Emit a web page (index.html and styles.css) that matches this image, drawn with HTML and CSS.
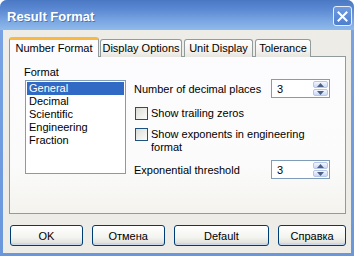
FILE: index.html
```html
<!DOCTYPE html>
<html lang="en">
<head>
    <meta charset="UTF-8">
    <title>Result Format</title>
    <link rel="stylesheet" href="styles.css">
</head>
<body>
    <div class="window">
        <div class="titlebar">
            <span class="title">Result Format</span>
            <button class="close" aria-label="Close">
                <svg width="11" height="11" viewBox="0 0 11 11">
                    <path d="M1.5 1.5 L9.5 9.5 M9.5 1.5 L1.5 9.5" stroke="#fff" stroke-width="2" stroke-linecap="square"/>
                </svg>
            </button>
        </div>

        <div class="body">
            <div class="tabs">
                <div class="tab active tab-number">Number Format</div>
                <div class="tab tab-display">Display Options</div>
                <div class="tab tab-unit">Unit Display</div>
                <div class="tab tab-tol">Tolerance</div>
            </div>

            <div class="panel">
                <div class="format-col">
                    <div class="group-label">Format</div>
                    <ul class="listbox">
                        <li class="selected">General</li>
                        <li>Decimal</li>
                        <li>Scientific</li>
                        <li>Engineering</li>
                        <li>Fraction</li>
                    </ul>
                </div>

                <div class="options-col">
                    <div class="field-row">
                        <span>Number of decimal places</span>
                        <div class="spin">
                            <span class="spin-value">3</span>
                            <div class="spin-buttons">
                                <div class="spin-btn"><svg width="7" height="4" viewBox="0 0 7 4"><path d="M0 4 L3.5 0 L7 4 Z" fill="#4d6185"/></svg></div>
                                <div class="spin-btn"><svg width="7" height="4" viewBox="0 0 7 4"><path d="M0 0 L3.5 4 L7 0 Z" fill="#4d6185"/></svg></div>
                            </div>
                        </div>
                    </div>

                    <label class="check check-first">
                        <span class="box"></span>
                        <span>Show trailing zeros</span>
                    </label>

                    <label class="check check-second">
                        <span class="box"></span>
                        <span>Show exponents in engineering<br>format</span>
                    </label>

                    <div class="field-row field-last">
                        <span>Exponential threshold</span>
                        <div class="spin">
                            <span class="spin-value">3</span>
                            <div class="spin-buttons">
                                <div class="spin-btn"><svg width="7" height="4" viewBox="0 0 7 4"><path d="M0 4 L3.5 0 L7 4 Z" fill="#4d6185"/></svg></div>
                                <div class="spin-btn"><svg width="7" height="4" viewBox="0 0 7 4"><path d="M0 0 L3.5 4 L7 0 Z" fill="#4d6185"/></svg></div>
                            </div>
                        </div>
                    </div>
                </div>
            </div>

            <div class="buttons">
                <button class="btn btn-ok">OK</button>
                <button class="btn btn-cancel">Отмена</button>
                <button class="btn btn-default">Default</button>
                <button class="btn btn-help">Справка</button>
            </div>
        </div>
    </div>
</body>
</html>
```

FILE: styles.css
```css
/* General Styles */
body {
    margin: 0;
    padding: 0;
    background: #ffffff;
    font-family: 'Liberation Sans', Arial, sans-serif;
    font-size: 11px;
    color: #000;
}

.window {
    width: 354px;
    height: 256px;
    box-sizing: border-box;
    display: flex;
    flex-direction: column;
    background: linear-gradient(to bottom, #7aa4e4, #6a96dc);
    border-radius: 7px 7px 0 0;
    overflow: hidden;
}

/* Title bar */
.titlebar {
    height: 30px;
    flex: none;
    display: flex;
    align-items: center;
    justify-content: space-between;
    padding: 0 2px 0 7px;
    background: linear-gradient(to bottom, #4a78c2 0%, #5a88d2 30%, #7eaae4 75%, #8fbaea 100%);
}

.title {
    color: #fff;
    font-weight: bold;
    font-size: 13px;
    text-shadow: 1px 1px 0 rgba(20, 50, 110, 0.45);
    margin-top: 2px;
}

.close {
    width: 19px;
    height: 20px;
    margin-top: 2px;
    padding: 0;
    display: flex;
    align-items: center;
    justify-content: center;
    border: 1px solid #e8eefa;
    border-radius: 3px;
    background: linear-gradient(to bottom, #6e9ae0, #4f7fcf);
}

/* Dialog body */
.body {
    flex: 1;
    margin: 0 3px 3px 3px;
    padding: 7px 5px 0 6px;
    background: #edece7;
    display: flex;
    flex-direction: column;
}

/* Tabs */
.tabs {
    display: flex;
    align-items: flex-end;
    gap: 1px;
    height: 20px;
    position: relative;
    z-index: 1;
    margin-bottom: -1px;
}

.tab {
    box-sizing: border-box;
    height: 18px;
    border: 1px solid #919b9c;
    border-bottom: none;
    border-radius: 3px 3px 0 0;
    background: linear-gradient(to bottom, #ffffff, #f1f0ec 70%, #e6e5df);
    text-align: center;
    line-height: 17px;
    white-space: nowrap;
}

.tab.active {
    height: 20px;
    background: #fcfcfe;
    border-top: 3px solid #f9b940;
    line-height: 16px;
}

.tab-number { width: 90px; }
.tab-display { width: 82px; }
.tab-unit { width: 69px; margin-left: 1px; }
.tab-tol { width: 56px; margin-left: 1px; }

/* Panel */
.panel {
    height: 158px;
    box-sizing: border-box;
    border: 1px solid #919b9c;
    background: linear-gradient(to bottom, #fcfcfe 0%, #fbfbfb 70%, #f4f3ee 100%);
    display: flex;
    padding: 8px 0 0 15px;
    gap: 8px;
}

.format-col {
    display: flex;
    flex-direction: column;
}

.group-label {
    line-height: 14px;
    margin-left: -1px;
}

.listbox {
    list-style: none;
    margin: 1px 0 0 0;
    padding: 1px;
    width: 101px;
    height: 94px;
    box-sizing: border-box;
    border: 1px solid #7f9db9;
    background: #fff;
}

.listbox li {
    height: 13px;
    line-height: 13px;
    padding-left: 2px;
}

.listbox li.selected {
    background: #316ac5;
    color: #fff;
}

/* Options column */
.options-col {
    width: 196px;
    padding-top: 14px;
    display: flex;
    flex-direction: column;
}

.field-row {
    display: flex;
    align-items: center;
    justify-content: space-between;
    height: 19px;
}

.field-last {
    margin-top: 6px;
}

.spin {
    width: 59px;
    height: 19px;
    box-sizing: border-box;
    border: 1px solid #7f9db9;
    background: #fff;
    display: flex;
    align-items: center;
    justify-content: space-between;
    padding: 1px;
}

.spin-value {
    padding-left: 4px;
}

.spin-buttons {
    display: flex;
    flex-direction: column;
    gap: 1px;
    width: 15px;
    height: 15px;
}

.spin-btn {
    flex: 1;
    box-sizing: border-box;
    border: 1px solid #b7c7e8;
    border-radius: 2px;
    background: linear-gradient(to bottom, #f4f7fe, #cad8f6);
    display: flex;
    align-items: center;
    justify-content: center;
}

.check {
    display: flex;
    align-items: flex-start;
    gap: 3px;
    line-height: 13px;
}

.check-first {
    margin-top: 9px;
}

.check-second {
    margin-top: 8px;
}

.box {
    width: 13px;
    height: 13px;
    box-sizing: border-box;
    flex: none;
    margin-left: 1px;
    border: 1px solid #1c5180;
    background: linear-gradient(135deg, #dcdcd7, #fbfbf9);
}

/* Buttons */
.buttons {
    display: flex;
    gap: 9px;
    margin-top: 11px;
    padding-left: 1px;
}

.btn {
    height: 21px;
    box-sizing: border-box;
    border: 1px solid #003c74;
    border-radius: 3px;
    background: linear-gradient(to bottom, #ffffff 0%, #f3f3ef 60%, #dcdbd3 100%);
    box-shadow: inset 0 -2px 0 #c9d7ef;
    font-family: 'Liberation Sans', Arial, sans-serif;
    font-size: 11px;
    color: #000;
    padding: 0;
}

.btn-ok { width: 73px; }
.btn-cancel { width: 73px; }
.btn-default { width: 96px; }
.btn-help { width: 68px; }
```
